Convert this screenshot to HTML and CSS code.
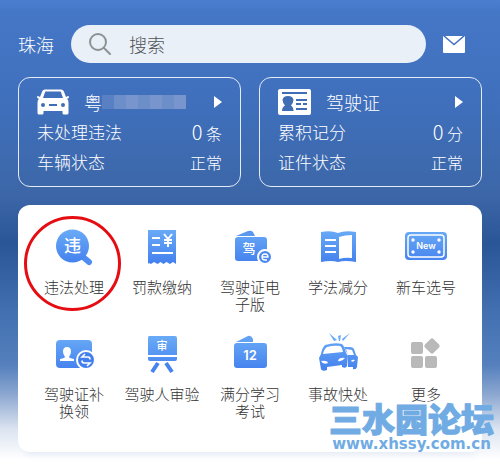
FILE: index.html
```html
<!DOCTYPE html>
<html lang="zh-CN">
<head>
    <meta charset="UTF-8">
    <meta name="viewport" content="width=device-width, initial-scale=1.0">
    <title>交管服务</title>
    <link rel="stylesheet" href="styles.css">
</head>
<body>
    <!-- shared gradient for the service icons -->
    <svg class="defs" width="0" height="0" aria-hidden="true">
        <defs>
            <linearGradient id="blue" gradientUnits="userSpaceOnUse" x1="0" y1="4" x2="0" y2="38">
                <stop offset="0" stop-color="#69aaf6"/>
                <stop offset="1" stop-color="#4380ee"/>
            </linearGradient>
        </defs>
    </svg>

    <header class="header">
        <a class="city" href="#">珠海</a>
        <form class="search">
            <svg width="22" height="22" viewBox="0 0 22 22" fill="none" stroke="#8e9295" stroke-width="2" stroke-linecap="round">
                <circle cx="9" cy="9" r="8"/>
                <path d="M15 15l6 6"/>
            </svg>
            <input type="search" placeholder="搜索" aria-label="搜索">
        </form>
        <button class="mail" type="button" aria-label="消息">
            <svg width="22" height="17" viewBox="0 0 22 17">
                <rect width="22" height="17" rx="1" fill="#fff"/>
                <path d="M1 0l10 8.500L21 0" fill="none" stroke="#4172bf" stroke-width="1.500"/>
            </svg>
        </button>
    </header>

    <section class="cards">
        <a class="card" href="#">
            <div class="card-head">
                <svg width="32" height="26" viewBox="0 0 32 26">
                    <path fill="#fff" fill-rule="evenodd" d="M8 .5h16q2 0 2.800 1.800L29 8l2-1q1 0 1 1.200-.2 1.300-2 1.500 1.500 1 1.500 4V24q0 1.500-1.500 1.500h-3q-1.500 0-1.500-1.500v-2h-19v2q0 1.500-1.500 1.500H2Q.5 25.500.5 24V13.700q0-3 1.500-4Q.2 9.500 0 8.200 0 7 1 7l2 1 2.200-5.700Q6 .5 8 .5zM8.300 2.500L6 9h20l-2.300-6.500z"/>
                    <g fill="#3f6eb5">
                        <circle cx="6" cy="16" r="2"/>
                        <circle cx="26" cy="16" r="2"/>
                        <rect x="12" y="15" width="8" height="2"/>
                    </g>
                </svg>
                <span class="card-title plate">粤<i class="masked"><b></b><b></b><b></b><b></b><b></b><b></b><b></b></i></span>
                <svg class="arrow" width="8" height="12" viewBox="0 0 8 12" fill="#fff"><path d="M0 0l8 6-8 6z"/></svg>
            </div>
            <div class="card-row"><span>未处理违法</span><span class="value"><em>0</em> 条</span></div>
            <div class="card-row"><span>车辆状态</span><span class="value">正常</span></div>
        </a>
        <a class="card" href="#">
            <div class="card-head">
                <svg width="33" height="26" viewBox="0 0 33 26">
                    <rect width="33" height="26" rx="2" fill="#fff"/>
                    <g fill="#3f6eb5">
                        <path d="M4 3h25v2H4zM18 10h11v2H18zM18 14h5v2h-5zM25 14h4v2h-4zM18 19h11v2H18z"/>
                        <path d="M4 22q0-4 3-5.500Q5 15 4.500 11q.5-4 5.500-4 5 0 5.500 4-.5 4-2.500 5.500 2.500 1.500 2.500 5.500z"/>
                    </g>
                </svg>
                <span class="card-title">驾驶证</span>
                <svg class="arrow" width="8" height="12" viewBox="0 0 8 12" fill="#fff"><path d="M0 0l8 6-8 6z"/></svg>
            </div>
            <div class="card-row"><span>累积记分</span><span class="value"><em>0</em> 分</span></div>
            <div class="card-row"><span>证件状态</span><span class="value">正常</span></div>
        </a>
    </section>

    <nav class="services">
        <a class="service" href="#">
            <svg class="mark" viewBox="0 0 97 95" fill="none" stroke="#e50c12" stroke-width="3"><ellipse cx="48.500" cy="47.500" rx="47" ry="46"/></svg>
            <svg width="44" height="42" viewBox="0 0 44 42">
                <path d="M31 31l6 5" stroke="#4f8df1" stroke-width="6" stroke-linecap="round"/>
                <circle cx="20.500" cy="20" r="16.500" fill="url(#blue)"/>
                <text x="20.500" y="26" font-size="17" class="icon-text">违</text>
            </svg>
            <span>违法处理</span>
        </a>
        <a class="service" href="#">
            <svg width="44" height="42" viewBox="0 0 44 42">
                <path d="M8 4h28v34l-3-2-3 2-3.500-2-3 2-3-2-3 2-3.500-2-3 2-2-1L8 38z" fill="url(#blue)"/>
                <path d="M12 12h8M12 19h8M12 27h21M24 8l4 5 4-5M28 13v8M24 14h8M24 17h8" fill="none" stroke="#fff" stroke-width="2"/>
            </svg>
            <span>罚款缴纳</span>
        </a>
        <a class="service" href="#">
            <svg width="44" height="42" viewBox="0 0 44 42">
                <path d="M8 10l12-5q3-1 5 1l2 4z" fill="#5a97ef"/>
                <rect x="7" y="11" width="32" height="24" rx="3" fill="url(#blue)"/>
                <text x="21" y="27" font-size="13" class="icon-text">驾</text>
                <circle cx="37" cy="31" r="7" fill="#4c88ef" stroke="#fff" stroke-width="2"/>
                <path d="M34 31h6q0-3-3-3t-3 3 3 3h2" fill="none" stroke="#fff" stroke-width="1.300"/>
            </svg>
            <span>驾驶证电<br>子版</span>
        </a>
        <a class="service" href="#">
            <svg width="44" height="42" viewBox="0 0 44 42">
                <path d="M5 6q10-2 17 1 7-3 18-1v30q-11-2-18 0-7-2-17 0z" fill="url(#blue)"/>
                <path d="M23 11q6-2 13-2v23q-7-1-13 1z" fill="#fff"/>
                <path d="M9 14h11M9 20h11M9 26h11" stroke="#fff" stroke-width="2"/>
            </svg>
            <span>学法减分</span>
        </a>
        <a class="service" href="#">
            <svg width="44" height="42" viewBox="0 0 44 42">
                <rect x="1" y="6" width="42" height="28" rx="4" fill="url(#blue)"/>
                <rect x="4" y="9" width="36" height="22" rx="3" fill="none" stroke="#fff" stroke-width="1.500"/>
                <g fill="#fff"><circle cx="9" cy="14" r="1.700"/><circle cx="35" cy="14" r="1.700"/><circle cx="9" cy="26" r="1.700"/><circle cx="35" cy="26" r="1.700"/></g>
                <text x="22" y="23" font-size="9" class="icon-text latin">New</text>
            </svg>
            <span>新车选号</span>
        </a>
        <a class="service" href="#">
            <svg width="44" height="42" viewBox="0 0 44 42">
                <rect x="4" y="7" width="36" height="28" rx="4" fill="url(#blue)"/>
                <path d="M15 14q4 0 4 4.500 0 3-2 5.500 0 1 5 2v2H8v-2q5-1 5-2-2-2.500-2-5.500 0-4.500 4-4.500z" fill="#fff"/>
                <circle cx="34" cy="27" r="9" fill="#4380ee" stroke="#fff" stroke-width="2"/>
                <path d="M33 21l-3 3h6q2 0 2 2.500M35 33l3-3h-6q-2 0-2-2.500" fill="none" stroke="#fff" stroke-width="1.600"/>
            </svg>
            <span>驾驶证补<br>换领</span>
        </a>
        <a class="service" href="#">
            <svg width="44" height="42" viewBox="0 0 44 42">
                <path d="M9 3h26q2 0 2 2v17H8V5q0-2 1-2zM8 24h29v2q0 2-2 2H10q-2 0-2-2z" fill="url(#blue)"/>
                <path d="M18 30l-6 9M26 30l6 9" stroke="#4583ee" stroke-width="4"/>
                <text x="22" y="17" font-size="11" class="icon-text">审</text>
            </svg>
            <span>驾驶人审验</span>
        </a>
        <a class="service" href="#">
            <svg width="44" height="42" viewBox="0 0 44 42">
                <path d="M8 9l12-6q3-1 5 3v3z" fill="#62a2f3"/>
                <rect x="6" y="10" width="33" height="25" rx="3" fill="url(#blue)"/>
                <text x="22" y="27" font-size="13" class="icon-text latin">12</text>
            </svg>
            <span>满分学习<br>考试</span>
        </a>
        <a class="service" href="#">
            <svg width="44" height="42" viewBox="0 0 44 42">
                <g fill="url(#blue)">
                    <path d="M13 0l8 7-3 1zM22 3l3-1-1 6h-1zM34 0l-7 8-1-2z"/>
                    <path fill-rule="evenodd" d="M28 14h6q3 0 4 2l2 6 2 2-1 10q-1 3-4 2v-2h-5V22zM30 16l2 6h6l-2-5zM35 28q2 2 4-1-3-1-4 1z"/>
                    <path fill-rule="evenodd" d="M9 12q10-3 17-1 2 1 4 9l2 3-1 10q-1 3-5 1v-2l-15 2v3q-5 2-6-1L3 25l2-4q1-6 4-9zM11 14q-3 2-4 7l20-2q-1-5-3-6-6-1-13 1zM5 28q2 4 7 2-1-3-7-2zM22 28q4 1 7-3-6-1-7 3z"/>
                </g>
            </svg>
            <span>事故快处</span>
        </a>
        <a class="service" href="#">
            <svg width="44" height="42" viewBox="0 0 44 42" fill="#b9b9b9">
                <rect x="7" y="9" width="12" height="12" rx="2"/>
                <rect x="7" y="23" width="12" height="12" rx="2"/>
                <rect x="21" y="23" width="12" height="12" rx="2"/>
                <rect x="22" y="7" width="12" height="12" rx="2" transform="rotate(45 28 13)"/>
            </svg>
            <span>更多</span>
        </a>
    </nav>

    <div class="watermark">
        <strong>三水园论坛</strong>
        <span>www.xhssy.com.cn</span>
    </div>
</body>
</html>
```

FILE: styles.css
```css
* {
    box-sizing: border-box;
}
html {
    min-height: 100%;
    background: linear-gradient(#4a7ecf 0, #4577c7 12px, #3f6fbb 110px, #3c66a7 195px, #2a5597 243px, #416fb0 310px, #5580bd 365px, #8da8d1 395px, #dde5f1 430px, #ffffff 460px);
}
body {
    margin: 0;
    padding: 25px 18px 12px;
    font-family: "Noto Sans CJK SC", sans-serif;
    font-weight: 300;
    color: #fff;
}
a {
    color: inherit;
    text-decoration: none;
}
.defs {
    position: absolute;
}

/* top bar */
.header {
    display: flex;
    align-items: center;
    gap: 17px;
    height: 38px;
}
.city {
    font-size: 18px;
}
.search {
    flex: 1;
    display: flex;
    align-items: center;
    gap: 18px;
    height: 38px;
    padding: 0 18px;
    border-radius: 19px;
    background: #e9f0f7;
}
.search input {
    flex: 1;
    min-width: 0;
    padding: 0;
    border: none;
    outline: none;
    background: none;
    font: inherit;
    font-size: 18px;
    color: #555;
}
.search input::placeholder {
    color: #505458;
    opacity: 1;
}
.mail {
    display: flex;
    margin-right: 17px;
    padding: 0;
    border: none;
    background: none;
    cursor: pointer;
}

/* vehicle and licence cards */
.cards {
    display: grid;
    grid-template-columns: 1fr 1fr;
    gap: 18px;
    margin-top: 14px;
}
.card {
    height: 110px;
    padding: 9px 18px;
    border: 1px solid #e4ecf7;
    border-radius: 12px;
    font-size: 17px;
}
.card-head {
    display: flex;
    align-items: center;
    gap: 15px;
    height: 30px;
}
.card-title {
    font-size: 18px;
    line-height: 30px;
}
.plate {
    display: flex;
    align-items: center;
}
.masked {
    display: flex;
}
.masked b {
    width: 12px;
    height: 14px;
    background: #7896cd;
}
.masked b:first-child {
    background: #5880c2;
}
.masked b:nth-child(even) {
    background: #6c8ec9;
}
.arrow {
    margin-left: auto;
}
.card-row {
    display: flex;
    align-items: center;
    justify-content: space-between;
    height: 30px;
    line-height: 30px;
}
.value {
    font-size: 16px;
}
.value em {
    font-size: 20px;
    font-style: normal;
}

/* service grid */
.services {
    display: grid;
    grid-template-columns: repeat(5, 1fr);
    grid-auto-rows: 107px;
    height: 247px;
    margin-top: 18px;
    padding: 21px 12px 0;
    border-radius: 12px;
    background: #fff;
    box-shadow: 0 8px 6px -6px #e4eaf4;
}
.service {
    position: relative;
    display: flex;
    flex-direction: column;
    align-items: center;
    gap: 10px;
    font-size: 15px;
    line-height: 17px;
    text-align: center;
    white-space: nowrap;
    color: #333;
}
.icon-text {
    fill: #fff;
    font-weight: 500;
    text-anchor: middle;
}
.latin {
    font-family: Inter, sans-serif;
    font-weight: 600;
}
.mark {
    position: absolute;
    top: -10px;
    left: -6px;
    width: 97px;
    height: 95px;
}

.watermark {
    position: absolute;
    top: 402px;
    right: 6px;
    display: flex;
    flex-direction: column;
    align-items: center;
    color: #70abe3;
}
.watermark strong {
    font-size: 33px;
    line-height: 33px;
    font-weight: 900;
    -webkit-text-stroke: 1px #70abe3;
}
.watermark span {
    font: bold 15px/18px "DejaVu Sans", sans-serif;
}
```
